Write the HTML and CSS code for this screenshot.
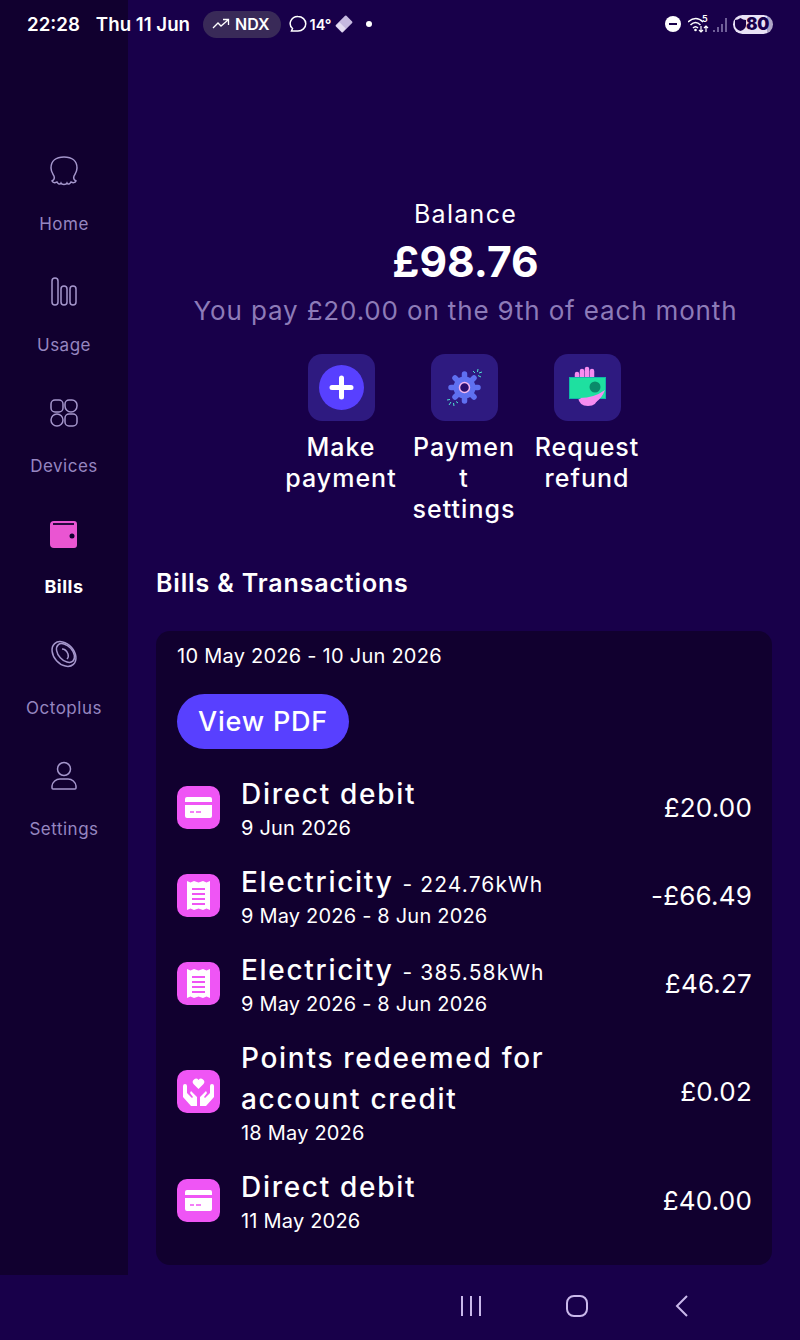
FILE: index.html
```html
<!DOCTYPE html>
<html lang="en">
<head>
    <meta charset="UTF-8">
    <meta name="viewport" content="width=device-width, initial-scale=1.0">
    <title>Bills</title>
    <link rel="stylesheet" href="styles.css">
</head>
<body>

    <!-- Status bar -->
    <div class="statusbar">
        <span class="time">22:28</span>
        <span class="date">Thu 11 Jun</span>
        <span class="pill">
            <svg width="18" height="12" viewBox="0 0 18 12"><path d="M1 10l5-5 3 3 7-6M11 1.500h5.500V7" fill="none" stroke="#fff" stroke-width="1.300"/></svg>
            NDX
        </span>
        <svg class="chat" width="18" height="18" viewBox="0 0 18 18"><path d="M9 1.500a7.500 7 0 0 1 0 14.500H2.500l1-2.500A7.500 7 0 0 1 9 1.500z" fill="none" stroke="#fff" stroke-width="1.500"/></svg>
        <span class="temp">14°</span>
        <svg width="18" height="18" viewBox="0 0 18 18"><rect x="1.500" y="4" width="15" height="10" rx="1" transform="rotate(-45 9 9)" fill="#c6b9e0"/><rect x="2" y="4.500" width="5" height="9" transform="rotate(-45 9 9)" fill="#e4dcf2"/></svg>
        <span class="dot"></span>
        <span class="spacer"></span>
        <span class="dnd"></span>
        <svg class="wifi" width="22" height="20" viewBox="0 0 22 20"><path d="M0 8q8-7 15 0M2.500 11q5-5 10 0M5 14q2.500-2.500 5 0" fill="none" stroke="#fff" stroke-width="1.500"/><circle cx="7.500" cy="16" r="1.300" fill="#fff"/><path d="M13 12v6M11 16l2 2 2-2M18 18v-6M16 14l2-2 2 2" fill="none" stroke="#fff" stroke-width="1.200"/><text x="14" y="8" class="wifi-5">5</text></svg>
        <svg width="16" height="18" viewBox="0 0 16 18"><path d="M2 17v-2M6 17v-5M10 17v-8M14 17V3" stroke="#6f5f98" stroke-width="2"/></svg>
        <span class="battery">
            <svg width="11" height="13" viewBox="0 0 11 13"><path d="M0 2q3 0 5.500-2Q8 2 11 2v5q0 4-5.500 6Q0 11 0 7z" fill="#190048"/></svg>
            <b>80</b>
        </span>
    </div>

    <div class="screen">
        <!-- Side navigation -->
        <nav class="sidebar">
            <a class="nav-item">
                <svg class="nav-icon" width="30" height="34" viewBox="0 0 30 34"><path d="M15 3C7 3 2 7 2 14c0 4 2 6 3 8 1 3 0 4-2 5 1 2 3 2 5 1 1 2 3 3 4 1 1 2 5 2 6 0 1 2 3 1 4-1 2 1 4 1 5-1-2-1-3-2-2-5 1-2 3-4 3-8 0-7-5-11-13-11z"/></svg>
                Home
            </a>
            <a class="nav-item">
                <svg class="nav-icon" width="30" height="34" viewBox="0 0 30 34"><rect x="3" y="3" width="6" height="27" rx="3"/><rect x="12" y="11" width="6" height="19" rx="3"/><rect x="21" y="11" width="6" height="19" rx="3"/></svg>
                Usage
            </a>
            <a class="nav-item">
                <svg class="nav-icon" width="30" height="34" viewBox="0 0 30 34"><rect x="2" y="4" width="12" height="12" rx="4"/><path d="M20 4h3a5 5 0 0 1 5 5v1a6 6 0 0 1-12 0V8a4 4 0 0 1 4-4z"/><circle cx="8" cy="24" r="6"/><rect x="16" y="18" width="12" height="12" rx="4"/></svg>
                Devices
            </a>
            <a class="nav-item active">
                <svg class="nav-icon" width="30" height="34" viewBox="0 0 30 34"><path d="M5 4h20a3 3 0 0 1 3 3v21a3 3 0 0 1-3 3H5a4 4 0 0 1-4-4V8a4 4 0 0 1 4-4z" fill="#ea55d2" stroke="none"/><path d="M4 7h21" stroke="#11002f" stroke-width="1.800"/><circle cx="23" cy="19" r="2.500" fill="#11002f" stroke="none"/></svg>
                Bills
            </a>
            <a class="nav-item">
                <svg class="nav-icon" width="30" height="34" viewBox="0 0 30 34"><ellipse cx="15" cy="16" rx="10" ry="14" transform="rotate(-42 15 16)"/><ellipse cx="16.500" cy="15" rx="7" ry="11" transform="rotate(-42 16.500 15)"/><path d="M13 11q4 0 6 5 1 3-1 5"/></svg>
                Octoplus
            </a>
            <a class="nav-item">
                <svg class="nav-icon" width="30" height="34" viewBox="0 0 30 34"><circle cx="15" cy="10" r="6.500"/><path d="M3 29v-2a8 8 0 0 1 8-7h8a8 8 0 0 1 8 7v2a1 1 0 0 1-1 1H4a1 1 0 0 1-1-1z"/></svg>
                Settings
            </a>
        </nav>

        <main class="content">
            <!-- Balance -->
            <section class="balance">
                <p class="balance-label">Balance</p>
                <p class="balance-value">£98.76</p>
                <p class="balance-note">You pay £20.00 on the 9th of each month</p>
            </section>

            <!-- Quick actions -->
            <section class="actions">
                <div class="action">
                    <div class="tile">
                        <svg width="45" height="45" viewBox="0 0 45 45"><circle cx="22.500" cy="22.500" r="22.500" fill="#5840ff"/><path d="M22.500 13v19M13 22.500h19" stroke="#fff" stroke-width="5" stroke-linecap="round"/></svg>
                    </div>
                    <p>Make<br>payment</p>
                </div>
                <div class="action">
                    <div class="tile">
                        <svg width="67" height="67" viewBox="0 0 67 67">
                            <g stroke="#5f70f0" stroke-width="5.500" stroke-linecap="round"><path d="M33.500 20v27M20 33.500h27M24 24l19 19M43 24L24 43"/></g>
                            <circle cx="33.500" cy="33.500" r="11" fill="#5f70f0"/>
                            <circle cx="33.500" cy="33.500" r="5" fill="#2a0f6e" stroke="#f4b6ee" stroke-width="1.500"/>
                            <path d="M42 17l2 2M47 15l-.5 3M51 18l-3 1M50 23l-3-1.500M16 46l3-.5M18 51l2-3M23 52l-.5-3M27 49l-2-1.500" stroke="#4fe3d0" stroke-width="1"/>
                        </svg>
                    </div>
                    <p>Paymen<br>t<br>settings</p>
                </div>
                <div class="action">
                    <div class="tile">
                        <svg width="67" height="67" viewBox="0 0 67 67">
                            <g stroke="#f78cf0" stroke-width="4.500" stroke-linecap="round"><path d="M23 20v6M28 17v9M33 15v10M38 17v9"/></g>
                            <path d="M24 43h20q-1 9-10 9t-10-9z" fill="#f78cf0"/>
                            <rect x="15.500" y="23.500" width="36" height="21" fill="#1ee0a0" stroke="#10b8a8"/>
                            <circle cx="41" cy="33" r="5.500" fill="#0a8a6a"/>
                            <path d="M26 44q14 0 25-8-3 8-9 12H30z" fill="#f78cf0"/>
                        </svg>
                    </div>
                    <p>Request<br>refund</p>
                </div>
            </section>

            <h2 class="section-title">Bills &amp; Transactions</h2>

            <!-- Statement card -->
            <section class="card">
                <p class="period">10 May 2026 - 10 Jun 2026</p>
                <button class="pdf-btn">View PDF</button>

                <div class="row">
                    <div class="row-icon">
                        <svg width="31" height="31" viewBox="0 0 31 31"><path d="M4 5h23a2 2 0 0 1 2 2v3H2V7a2 2 0 0 1 2-2zM2 13h27v11a2 2 0 0 1-2 2H4a2 2 0 0 1-2-2z" fill="#fff"/><path d="M7 20h4M13 20h5" stroke="#ef55f5" stroke-width="1.500"/></svg>
                    </div>
                    <div class="row-text">
                        <div class="row-title">Direct debit</div>
                        <div class="row-sub">9 Jun 2026</div>
                    </div>
                    <div class="amount">£20.00</div>
                </div>

                <div class="row">
                    <div class="row-icon">
                        <svg width="31" height="31" viewBox="0 0 31 31"><path d="M4 1l3.500 1.500L11 1l4.500 1.500L20 1l3.500 1.500L27 1v29l-3.500-1.500L20 30l-4.500-1.500L11 30l-3.500-1.500L4 30z" fill="#fff"/><path d="M9 9h13M9 14h13M9 19h13M9 24h13" stroke="#ef55f5" stroke-width="2"/></svg>
                    </div>
                    <div class="row-text">
                        <div class="row-title">Electricity <small>- 224.76kWh</small></div>
                        <div class="row-sub">9 May 2026 - 8 Jun 2026</div>
                    </div>
                    <div class="amount">-£66.49</div>
                </div>

                <div class="row">
                    <div class="row-icon">
                        <svg width="31" height="31" viewBox="0 0 31 31"><path d="M4 1l3.500 1.500L11 1l4.500 1.500L20 1l3.500 1.500L27 1v29l-3.500-1.500L20 30l-4.500-1.500L11 30l-3.500-1.500L4 30z" fill="#fff"/><path d="M9 9h13M9 14h13M9 19h13M9 24h13" stroke="#ef55f5" stroke-width="2"/></svg>
                    </div>
                    <div class="row-text">
                        <div class="row-title">Electricity <small>- 385.58kWh</small></div>
                        <div class="row-sub">9 May 2026 - 8 Jun 2026</div>
                    </div>
                    <div class="amount">£46.27</div>
                </div>

                <div class="row">
                    <div class="row-icon">
                        <svg width="33" height="31" viewBox="0 0 33 31"><path d="M16.500 13l-5-5a3 3 0 0 1 5-4 3 3 0 0 1 5 4z" fill="#fff"/><path d="M1 10a2 2 0 0 1 4 0v7l5 5 1-1-3-4 1-2 6 6v9H9l-8-9zM32 10a2 2 0 0 0-4 0v7l-5 5-1-1 3-4-1-2-6 6v9h6l8-9z" fill="#fff"/></svg>
                    </div>
                    <div class="row-text">
                        <div class="row-title">Points redeemed for<br>account credit</div>
                        <div class="row-sub">18 May 2026</div>
                    </div>
                    <div class="amount">£0.02</div>
                </div>

                <div class="row">
                    <div class="row-icon">
                        <svg width="31" height="31" viewBox="0 0 31 31"><path d="M4 5h23a2 2 0 0 1 2 2v3H2V7a2 2 0 0 1 2-2zM2 13h27v11a2 2 0 0 1-2 2H4a2 2 0 0 1-2-2z" fill="#fff"/><path d="M7 20h4M13 20h5" stroke="#ef55f5" stroke-width="1.500"/></svg>
                    </div>
                    <div class="row-text">
                        <div class="row-title">Direct debit</div>
                        <div class="row-sub">11 May 2026</div>
                    </div>
                    <div class="amount">£40.00</div>
                </div>
            </section>
        </main>
    </div>

    <!-- System navigation -->
    <div class="navbar">
        <svg width="22" height="22" viewBox="0 0 22 22"><path d="M2 1v20M11 1v20M20 1v20" stroke="#c9b8ea" stroke-width="2"/></svg>
        <svg width="22" height="22" viewBox="0 0 22 22"><rect x="1" y="1" width="20" height="20" rx="7" fill="none" stroke="#c9b8ea" stroke-width="2"/></svg>
        <svg width="22" height="22" viewBox="0 0 22 22"><path d="M15 1L5 11l10 10" fill="none" stroke="#c9b8ea" stroke-width="2"/></svg>
    </div>

</body>
</html>
```

FILE: styles.css
```css
* {
    box-sizing: border-box;
}
body {
    margin: 0;
    width: 800px;
    height: 1340px;
    background-color: #18004a;
    color: white;
    font-family: Inter, sans-serif;
    overflow: hidden;
    position: relative;
}
p {
    margin: 0;
}

/* status bar */
.statusbar {
    position: absolute;
    top: 10px;
    left: 27px;
    right: 27px;
    height: 28px;
    display: flex;
    align-items: center;
    font-size: 18.700px;
    font-weight: 600;
}
.time {
    margin-right: 16px;
}
.date {
    margin-right: 13px;
}
.pill {
    display: flex;
    align-items: center;
    gap: 5px;
    height: 27px;
    padding: 0 11px 0 9px;
    border-radius: 14px;
    background: #392a58;
    font-size: 16px;
    font-weight: 600;
}
.chat {
    margin-left: 8px;
}
.temp {
    font-size: 14.500px;
    font-weight: 600;
    margin: 0 3px 0 3px;
}
.dot {
    width: 6px;
    height: 6px;
    margin-left: 13px;
    border-radius: 50%;
    background: white;
}
.spacer {
    flex: 1;
}
.dnd {
    position: relative;
    width: 16px;
    height: 16px;
    margin-right: 7px;
    border-radius: 50%;
    background: white;
}
.dnd::after {
    content: "";
    position: absolute;
    left: 4px;
    right: 4px;
    top: 7px;
    height: 2px;
    background: #18004a;
}
.wifi {
    margin-right: 2px;
}
.wifi-5 {
    font-size: 9px;
    fill: white;
}
.battery {
    display: flex;
    align-items: center;
    gap: 0;
    width: 40px;
    height: 19px;
    margin-left: 5px;
    padding-left: 2px;
    border-radius: 10px;
    background: linear-gradient(90deg, #e9e2f6 84%, #b0a6c8 84%);
    color: #18004a;
    font-size: 17px;
    letter-spacing: -0.3px;
}

/* main layout */
.screen {
    display: flex;
    height: 1275px;
}
.sidebar {
    flex: 0 0 128px;
    display: flex;
    flex-direction: column;
    padding-top: 154px;
    background-color: #11002f;
}
.nav-item {
    display: flex;
    flex-direction: column;
    align-items: center;
    height: 121px;
    color: #9686c0;
    font-size: 17px;
    letter-spacing: 0.5px;
}
.nav-icon {
    margin-bottom: 26px;
    fill: none;
    stroke: #a596cc;
    stroke-width: 1.500;
}
.nav-item.active {
    color: white;
    font-size: 18px;
    font-weight: 700;
    line-height: 19px;
}

.content {
    flex: 1;
    padding: 198px 28px 0 28px;
}
.balance {
    padding-left: 3px;
    text-align: center;
}
.balance-label {
    font-size: 25px;
    line-height: 32px;
    letter-spacing: 1.3px;
}
.balance-value {
    margin-top: 6px;
    font-size: 42.500px;
    font-weight: 700;
    line-height: 52px;
}
.balance-note {
    margin-top: 7px;
    font-size: 26px;
    line-height: 32px;
    letter-spacing: 0.85px;
    color: #8d7bb8;
}

.actions {
    display: flex;
    justify-content: center;
    margin-top: 27px;
}
.action {
    width: 123px;
    text-align: center;
    font-size: 25px;
    font-weight: 500;
    line-height: 31px;
    letter-spacing: 1px;
}
.tile {
    display: flex;
    align-items: center;
    justify-content: center;
    width: 67px;
    height: 67px;
    margin: 0 auto 11px;
    border-radius: 14px;
    background: #2e1a80;
}

.section-title {
    margin: 41px 0 31px;
    font-size: 25px;
    font-weight: 600;
    line-height: 34px;
    letter-spacing: 0.85px;
}

/* statement */
.card {
    height: 634px;
    padding: 10px 20px 0 21px;
    border-radius: 14px;
    background-color: #11002f;
}
.period {
    font-size: 20px;
    line-height: 30px;
    letter-spacing: 0.25px;
}
.pdf-btn {
    display: block;
    width: 172px;
    height: 55px;
    margin: 23px 0 14px;
    border: none;
    border-radius: 28px;
    background-color: #5840ff;
    color: white;
    font-family: inherit;
    font-size: 27px;
    font-weight: 500;
    letter-spacing: 0.8px;
}
.row {
    display: flex;
    align-items: center;
    padding: 10.500px 0;
}
.row-icon {
    flex: 0 0 43px;
    display: flex;
    align-items: center;
    justify-content: center;
    height: 43px;
    margin-right: 21px;
    border-radius: 10px;
    background: #ef55f5;
}
.row-text {
    flex: 1;
}
.row-title {
    font-size: 28px;
    font-weight: 500;
    line-height: 41px;
    letter-spacing: 1.7px;
}
.row-title small {
    font-size: 21px;
    font-weight: 400;
    line-height: 1;
    letter-spacing: 1.1px;
}
.row-sub {
    font-size: 20px;
    line-height: 26px;
    letter-spacing: 0.2px;
}
.amount {
    font-size: 26px;
    letter-spacing: 0.2px;
}

/* system nav */
.navbar {
    display: flex;
    align-items: center;
    justify-content: flex-end;
    gap: 84px;
    height: 65px;
    padding: 0 106px 3px 0;
}
```
